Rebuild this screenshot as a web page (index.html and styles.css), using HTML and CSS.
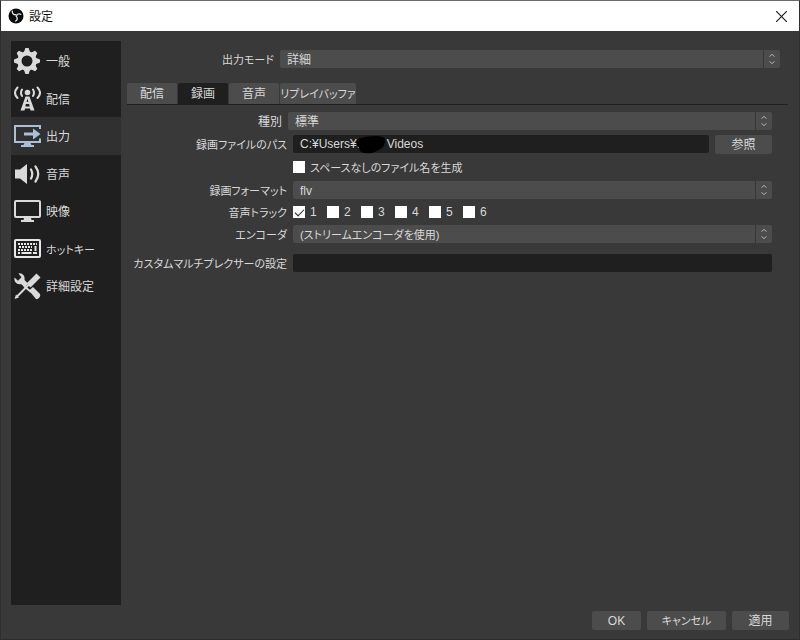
FILE: index.html
```html
<!DOCTYPE html>
<html lang="ja">
<head>
<meta charset="utf-8">
<meta name="viewport" content="width=device-width, initial-scale=1">
<title>設定</title>
<link rel="stylesheet" href="styles.css">
</head>
<body>
<div class="window">
  <header class="titlebar">
    <svg class="logo" viewBox="0 0 16 16" aria-hidden="true">
      <circle cx="8" cy="8" r="7.5" fill="#0c0c0c"/>
      <g fill="none" stroke="#e8e8e8" stroke-width="1.3" stroke-linecap="round">
        <path d="M4.300 3.200C4.200 5.600 5.600 7 8 6.700"/>
        <path d="M12.800 6.300C10.800 5.200 9 6 8.500 8.100"/>
        <path d="M7.600 13C9.600 11.800 9.800 10 8.200 8.400"/>
      </g>
    </svg>
    <h1 class="title">設定</h1>
    <button class="close" type="button" aria-label="閉じる">
      <svg viewBox="0 0 10 10" aria-hidden="true"><path d="M0 0L10 10M10 0L0 10" fill="none" stroke="#222" stroke-width="1.1"/></svg>
    </button>
  </header>

  <div class="main">
    <nav class="sidebar">
      <a class="item" href="#general">
        <svg class="icon" viewBox="0 0 28 28" aria-hidden="true">
          <g fill="#dadada"><g id="teeth">
            <path d="M12.400 1h3.200l1.800 5h-6.800zM12.400 27h3.200l1.800-5h-6.800z"/>
            <path d="M1 12.400v3.200l5 1.800v-6.800zM27 12.400v3.200l-5 1.800v-6.800z"/></g>
            <use href="#teeth" transform="rotate(45 14 14)"/>
          </g>
          <circle cx="14" cy="14" r="7.600" fill="none" stroke="#dadada" stroke-width="4.200"/>
        </svg><span>一般</span></a>
      <a class="item" href="#stream">
        <svg class="icon" viewBox="0 0 28 28" aria-hidden="true">
          <circle cx="14.500" cy="7.500" r="2.800" fill="#dadada"/>
          <g fill="none" stroke="#dadada" stroke-width="2" stroke-linecap="round">
            <path d="M9 4.500Q7 8 9 11M20 4.500Q22 8 20 11M4.500 2.500Q-.5 8 4.500 13M24.500 2.500Q29.500 8 24.500 13"/>
          </g>
          <path fill="#dadada" fill-rule="evenodd" d="M12.500 11.500H16.500L21.500 25.500H17.500L17 23.500H12L11.500 25.500H7.500zM13.600 17H15.400L14.500 13.500zM12.300 21.500H16.700L16.200 19H12.800z"/>
        </svg><span>配信</span></a>
      <a class="item selected" href="#output" aria-current="page">
        <svg class="icon" viewBox="0 0 28 28" aria-hidden="true">
          <path d="M27 7V4H2V20H27V16.500" fill="none" stroke="#a9bfd6" stroke-width="2"/>
          <path d="M11 10.500H20V6.500L27.500 12L20 17.500V13.500H11zM11.500 21H17.500L18.500 23H21V25H8V23H10.500z" fill="#a9bfd6"/>
        </svg><span>出力</span></a>
      <a class="item" href="#audio">
        <svg class="icon" viewBox="0 0 28 28" aria-hidden="true">
          <path d="M2 9.500H7L14 4V24L7 18.500H2z" fill="#dadada"/>
          <g fill="none" stroke="#dadada" stroke-width="2.200" stroke-linecap="round"><path d="M18 9.500Q20.500 14 18 18.500M22.500 6.500Q28 14 22.500 21.500"/></g>
        </svg><span>音声</span></a>
      <a class="item" href="#video">
        <svg class="icon" viewBox="0 0 28 28" aria-hidden="true">
          <rect x="2" y="4" width="25" height="16" rx="1" fill="none" stroke="#dadada" stroke-width="2"/>
          <path d="M11 21H18L18.500 23H21V25H8V23H10.500z" fill="#dadada"/>
        </svg><span>映像</span></a>
      <a class="item" href="#hotkeys">
        <svg class="icon" viewBox="0 0 28 28" aria-hidden="true">
          <rect x="2" y="5" width="25" height="17" rx="1" fill="none" stroke="#e6e6e6" stroke-width="2"/>
          <path d="M5 9H24M6 12H19M5 15H19" fill="none" stroke="#e6e6e6" stroke-width="2" stroke-dasharray="2 1"/>
          <path d="M5 18H7M8.500 18H18.500M20 18H24M22.500 11V16" fill="none" stroke="#e6e6e6" stroke-width="2"/>
        </svg><span class="kana">ホットキー</span></a>
      <a class="item" href="#advanced">
        <svg class="icon" viewBox="0 0 28 28" aria-hidden="true">
          <path d="M3.500 25L16 12.500" stroke="#dadada" stroke-width="2" fill="none"/>
          <path d="M1.500 27L3 22.500L6 25.500z" fill="#dadada"/>
          <path d="M13.500 11.500L23.500 1.500L27.500 5.500L17.500 15.500z" fill="#dadada"/>
          <path d="M5.500 1.500C9 .5 12.500 4 11.500 8L15 11.500L12 15.500L8 12C4 13 .600 9.800 1.500 5.500L5 8.800L8.500 5.200z" fill="#dadada"/>
          <path d="M16 18.500L20 15L27 22Q28 24 26 26Q24 28 22.500 26.500z" fill="#dadada"/>
          <path d="M11 14L18 20" stroke="#dadada" stroke-width="2" fill="none"/>
        </svg><span>詳細設定</span></a>
    </nav>

    <main class="content">
      <div class="row mode">
        <label class="label kana" for="mode">出力モード</label>
        <div class="combo">
          <select id="mode"><option>詳細</option></select>
          <svg class="arrows" viewBox="0 0 17 18" aria-hidden="true"><path d="M6 6.500L8.500 4L11 6.500M6 11.500L8.500 14L11 11.500"/></svg>
        </div>
      </div>

      <div class="tabs" role="tablist">
        <button class="tab" type="button" role="tab">配信</button>
        <button class="tab active" type="button" role="tab" aria-selected="true">録画</button>
        <button class="tab" type="button" role="tab">音声</button>
        <button class="tab wide kana" type="button" role="tab">リプレイバッファ</button>
      </div>

      <div class="panel">
        <div class="row type">
          <label class="label" for="type">種別</label>
          <div class="combo">
            <select id="type"><option>標準</option></select>
            <svg class="arrows" viewBox="0 0 17 18" aria-hidden="true"><path d="M6 6.500L8.500 4L11 6.500M6 11.500L8.500 14L11 11.500"/></svg>
          </div>
        </div>
        <div class="row path">
          <label class="label kana" for="path">録画ファイルのパス</label>
          <div class="field">
            <input class="text" id="path" type="text" value="C:¥Users¥.&nbsp;&nbsp;&nbsp;&nbsp;&nbsp;&nbsp;&nbsp;&nbsp;Videos">
            <svg class="mask" viewBox="0 0 30 18" aria-hidden="true"><path d="M2 3Q8 0 22 0Q30 1 29 4Q29 9 26 12Q22 15 16 17Q7 18 4 15Q3 11 1 9Q0 5 2 3z"/></svg>
          </div>
          <button class="button browse" type="button">参照</button>
        </div>
        <div class="row nospace">
          <span class="label"></span>
          <label class="check kana"><input type="checkbox"><span>スペースなしのファイル名を生成</span></label>
        </div>
        <div class="row format">
          <label class="label kana" for="format">録画フォーマット</label>
          <div class="combo">
            <select id="format"><option>flv</option></select>
            <svg class="arrows" viewBox="0 0 17 18" aria-hidden="true"><path d="M6 6.500L8.500 4L11 6.500M6 11.500L8.500 14L11 11.500"/></svg>
          </div>
        </div>
        <div class="row tracks" role="group" aria-labelledby="tracks">
          <span class="label kana" id="tracks">音声トラック</span>
          <label class="check"><input type="checkbox" checked>1</label>
          <label class="check"><input type="checkbox">2</label>
          <label class="check"><input type="checkbox">3</label>
          <label class="check"><input type="checkbox">4</label>
          <label class="check"><input type="checkbox">5</label>
          <label class="check"><input type="checkbox">6</label>
        </div>
        <div class="row encoder">
          <label class="label kana" for="encoder">エンコーダ</label>
          <div class="combo">
            <select class="kana" id="encoder"><option>(ストリームエンコーダを使用)</option></select>
            <svg class="arrows" viewBox="0 0 17 18" aria-hidden="true"><path d="M6 6.500L8.500 4L11 6.500M6 11.500L8.500 14L11 11.500"/></svg>
          </div>
        </div>
        <div class="row muxer">
          <label class="label kana" for="muxer">カスタムマルチプレクサーの設定</label>
          <div class="field"><input class="text" id="muxer" type="text"></div>
        </div>
      </div>
    </main>
  </div>

  <footer class="footer">
    <button class="button ok" type="button">OK</button>
    <button class="button cancel kana" type="button">キャンセル</button>
    <button class="button apply" type="button">適用</button>
  </footer>
</div>
</body>
</html>
```
FILE: styles.css
```css
* { box-sizing: border-box; }

body {
  margin: 0;
  background: #393939;
  color: #d8d8d8;
  font: 12px/18px "Liberation Sans", "Noto Sans CJK JP", sans-serif;
  font-feature-settings: "palt";
}

button, input, select {
  font: inherit;
  font-feature-settings: inherit;
  color: inherit;
  border: 0;
  margin: 0;
}

.kana { font-size: 11px; }

.window {
  display: flex;
  flex-direction: column;
  min-height: 100vh;
  border: 1px solid #2e2e2e;
  border-top-color: #6b6b6b;
}

.titlebar {
  display: flex;
  align-items: center;
  gap: 5px;
  height: 30px;
  padding: 0 12px 0 7px;
  background: #fff;
  color: #111;
}
.logo { width: 16px; height: 16px; }
.title { flex: 1; margin: 0; padding-top: 2px; font-size: 12px; font-weight: 400; }
.close { width: 11px; height: 11px; padding: 0; background: none; }
.close svg { display: block; width: 11px; height: 11px; }

.main { display: flex; flex: 1; padding: 10px 11px 0 10px; }

.sidebar {
  width: 110px;
  padding-top: 1px;
  background: #1f1f1f;
}
.item {
  display: flex;
  align-items: center;
  gap: 5px;
  height: 38px;
  padding-left: 2px;
  color: inherit;
  text-decoration: none;
  white-space: nowrap;
}
.item:nth-child(even) { height: 37px; }
.item.selected { background: #303030; }
.item span, .label, .check span { padding-top: 2px; }
.icon { flex: none; width: 28px; height: 28px; }

.content { flex: 1; min-width: 0; padding: 9px 0 0 6px; }

.row { display: flex; align-items: center; gap: 6px; height: 18px; }
.label { flex: none; width: 160px; text-align: right; white-space: nowrap; }
.mode { padding-right: 8px; }
.mode .label { width: 147px; }
.type .label { width: 155px; }

.combo, .field { position: relative; flex: 1; min-width: 0; }
select {
  display: block;
  width: 100%;
  height: 18px;
  padding: 1px 24px 0 7px;
  border-radius: 2px;
  background: #4c4c4c;
  appearance: none;
}
.arrows {
  position: absolute;
  top: 0;
  right: 0;
  width: 17px;
  height: 18px;
  border-left: 1px solid #373737;
  fill: none;
  stroke: #c4c4c4;
}

.tabs {
  display: flex;
  gap: 1px;
  margin-top: 15px;
  border-bottom: 1px solid #202020;
}
.tab {
  width: 50px;
  height: 21px;
  padding: 1px 0 0;
  border-radius: 2px 2px 0 0;
  background: #4c4c4c;
  white-space: nowrap;
}
.tab.wide { width: 76px; }
.tab.active { background: #1f1f1f; }

.panel { padding: 7px 16px 0 0; }
.path, .nospace { margin-top: 5px; }
.format { margin-top: 5px; }
.tracks, .encoder { margin-top: 4px; }
.muxer { margin-top: 11px; }

.text {
  display: block;
  width: 100%;
  height: 18px;
  padding: 0 7px;
  border-radius: 2px;
  background: #1f1f1f;
}
.mask { position: absolute; top: 1px; left: 63px; width: 30px; height: 18px; }

.button {
  height: 19px;
  padding: 1px 0 0;
  border-radius: 2px;
  background: #4c4c4c;
}
.browse { width: 57px; }

.check { display: flex; align-items: center; gap: 5px; white-space: nowrap; }
.tracks .check { width: 28px; }
input[type="checkbox"] {
  width: 12px;
  height: 12px;
  background: #fff;
  appearance: none;
}
input[type="checkbox"]:checked::after {
  content: "";
  display: block;
  width: 8px;
  height: 4px;
  margin: 3px 0 0 2px;
  border: solid #222;
  border-width: 0 0 1px 1px;
  transform: rotate(-45deg);
}

.footer {
  display: flex;
  justify-content: flex-end;
  gap: 6px;
  padding: 6px 10px 9px;
}
.ok { width: 49px; }
.cancel { width: 79px; }
.apply { width: 57px; }
```
